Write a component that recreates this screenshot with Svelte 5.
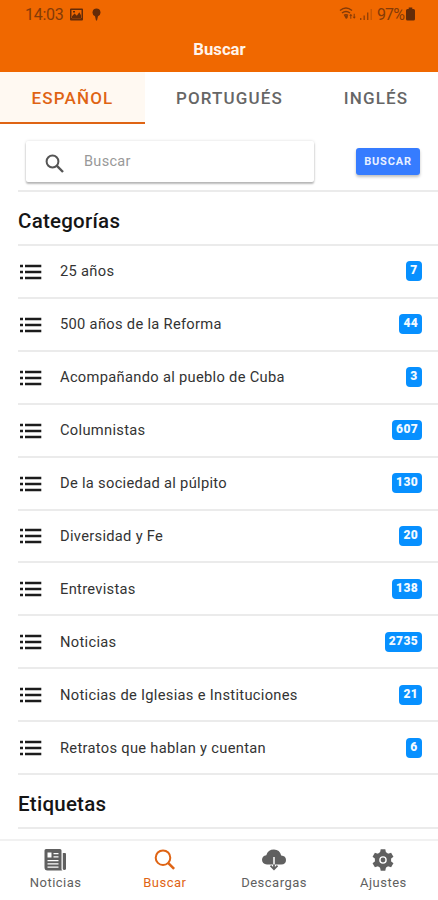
<script>
  const languages = ['ESPAÑOL', 'PORTUGUÉS', 'INGLÉS'];
  const categories = [
    ['25 años', 7],
    ['500 años de la Reforma', 44],
    ['Acompañando al pueblo de Cuba', 3],
    ['Columnistas', 607],
    ['De la sociedad al púlpito', 130],
    ['Diversidad y Fe', 20],
    ['Entrevistas', 138],
    ['Noticias', 2735],
    ['Noticias de Iglesias e Instituciones', 21],
    ['Retratos que hablan y cuentan', 6]
  ];
  let language = $state('ESPAÑOL');
  let query = $state('');
</script>

<div class="app">
  <header>
    <div class="status">
      <span class="time">14:03</span>
      <svg class="photo" width="13" height="13" viewBox="0 0 13 13">
        <path fill="currentColor" fill-rule="evenodd" d="M1 0.5h11a1 1 0 0 1 1 1v10a1 1 0 0 1-1 1H1a1 1 0 0 1-1-1v-10a1 1 0 0 1 1-1zM1.5 2v8h10V2zM2 10.3V8.2l2.5-2.7 2.3 2.3 2.5-3.5L11 7.3v3zM3 3h2v1.6H3z" />
      </svg>
      <svg class="pin" width="9" height="13" viewBox="0 0 9 13">
        <path fill="currentColor" d="M4.5 0.5a4 4 0 0 1 1.5 7.7L5 12.5H4L3 8.2A4 4 0 0 1 4.5.5z" />
      </svg>
      <span class="grow"></span>
      <svg class="wifi" width="18" height="14" viewBox="0 0 18 14" fill="none" stroke="currentColor">
        <path stroke-width="1.5" d="M1 3.5Q7 -1.3 13 3.5M3 6q4-3.1 8 0M5 8.4q2-1.5 4 0" />
        <path fill="currentColor" stroke="none" d="M5 8.500h4L8.500 11 7 12zM11.8 6.800l1.6 2h-1.1v3h-1v-3h-1.1zM15.2 11.800l-1.6-2h1.1v-3h1v3h1.1z" />
      </svg>
      <svg class="signal" width="13" height="13" viewBox="0 0 13 13">
        <path fill="currentColor" opacity=".85" d="M0 10h1.4v2H0zM3.5 7.5h1.4V12H3.5zM7 4.5h1.4V12H7z" />
        <path fill="currentColor" opacity=".35" d="M10.5 1H12v11h-1.5z" />
      </svg>
      <span class="percent">97%</span>
      <svg class="battery" width="9" height="14" viewBox="0 0 9 14">
        <path fill="currentColor" d="M2.7.5h3.6V2h1.2Q9 2 9 3.5v8.5q0 1.5-1.5 1.5h-6Q0 13.5 0 12V3.5Q0 2 1.5 2h1.2z" />
      </svg>
    </div>
    <h1>Buscar</h1>
  </header>

  <div class="languages">
    {#each languages as name}
      <button class:active={language === name} onclick={() => (language = name)}><span>{name}</span></button>
    {/each}
  </div>

  <main>
    <div class="search">
      <label>
        <svg width="20" height="20" viewBox="0 0 20 20" fill="none" stroke="#555" stroke-width="2">
          <circle cx="7.5" cy="7.5" r="5.9" />
          <path stroke-width="2.4" d="M11.7 11.7L18 18" />
        </svg>
        <input placeholder="Buscar" bind:value={query} />
      </label>
      <button>BUSCAR</button>
    </div>
    <h2 class="first">Categorías</h2>
    {#each categories as [name, count]}
      <div class="row">
        <svg width="22" height="16" viewBox="0 0 22 16" fill="#1c1c1c">
          <path d="M0 .8h3v2.4H0zM5 .8h16.3v2.4H5zM0 6.8h3v2.4H0zM5 6.8h16.3v2.4H5zM0 12.8h3v2.4H0zM5 12.8h16.3v2.4H5z" />
        </svg>
        <span class="name">{name}</span>
        <span class="badge">{count}</span>
      </div>
    {/each}
    <h2>Etiquetas</h2>
  </main>

  <nav>
    <a href="#noticias">
      <svg width="23" height="22" viewBox="0 0 23 22">
        <path fill="currentColor" fill-rule="evenodd" d="M2 0h14q1.5 0 1.5 1.5V20q0 1.5 1.5 1.5H3.5Q.5 21.5.5 18.5v-17Q.5 0 2 0zM3.5 3.5v5h4v-5zM9.500 4v1.300h5V4zM9.500 7.200v1.300h5V7.200zM3.500 11v1.300h11V11zM3.500 14.200v1.300h11v-1.300zM3.500 17.400v1.300h11v-1.300z" />
        <path fill="currentColor" d="M18.8 4H21q1 0 1 1v14.5q0 1.5-1.6 1.5t-1.6-1.5z" />
      </svg>
      <span>Noticias</span>
    </a>
    <a href="#buscar" class="active">
      <svg width="22" height="22" viewBox="0 0 22 22" fill="none" stroke="currentColor">
        <circle cx="9" cy="8.7" r="7.3" stroke-width="2" />
        <path stroke-width="2.5" d="M14.1 13.9l6 6" />
      </svg>
      <span>Buscar</span>
    </a>
    <a href="#descargas">
      <svg width="24" height="22" viewBox="0 0 24 22">
        <path fill="currentColor" d="M5 15.5Q0 15 0 10.8 0 7 4.3 6.2 5.8.5 12 .5q5.8 0 7.2 6Q24 6.8 24 11q0 4.3-4.8 4.5z" />
        <path fill="none" stroke="#fff" stroke-width="1.5" d="M12 8v7.5" />
        <path fill="none" stroke="currentColor" stroke-width="1.8" d="M12 15.5v4M8.5 16.7l3.5 3.5 3.5-3.5" />
      </svg>
      <span>Descargas</span>
    </a>
    <a href="#ajustes">
      <svg width="22" height="22" viewBox="0 0 22 22">
        <g fill="currentColor">
          <circle cx="11" cy="11" r="8.2" />
          {#each [0, 60, 120, 180, 240, 300] as angle}
            <path transform="rotate({angle} 11 11)" d="M8.7.3h4.6l.8 4H7.900z" />
          {/each}
        </g>
        <circle cx="11" cy="11" r="3.1" fill="none" stroke="#fff" stroke-width="1.4" />
      </svg>
      <span>Ajustes</span>
    </a>
  </nav>
</div>

<style>
  :global(body) { background: #fff; }
  .app {
    width: 438px;
    height: 900px;
    display: flex;
    flex-direction: column;
    overflow: hidden;
    background: #fff;
    color: #222;
    font-family: Roboto, sans-serif;
  }
  .app * { box-sizing: border-box; }
  svg { display: block; flex: none; }
  button { border: 0; padding: 0; background: none; font-family: inherit; }
  header { height: 72px; flex: none; background: #f06800; }
  .status {
    height: 28px;
    padding: 0 23px 0 25px;
    display: flex;
    align-items: center;
    color: #843b08;
    font-size: 16px;
  }
  .time { letter-spacing: -0.3px; width: 45px; }
  .photo, .pin { color: #632b08; }
  .pin { margin-left: 9px; }
  .grow { flex: 1; }
  .wifi { margin-right: 1px; }
  .signal { margin-left: 2px; }
  .percent { margin-left: 4px; letter-spacing: -0.9px; }
  .battery { margin-left: 2px; color: #632b08; }
  h1 {
    margin: 0;
    height: 43px;
    line-height: 43px;
    padding-left: 1px;
    text-align: center;
    color: #fff4eb;
    font-size: 16.7px;
    font-weight: 700;
  }
  .languages { height: 52px; flex: none; display: flex; }
  .languages button {
    flex: 0 0 145px;
    padding-top: 2px;
    color: #666;
    font-size: 17px;
    font-weight: 500;
    letter-spacing: 1.15px;
    border-bottom: 2px solid transparent;
  }
  .languages button:nth-child(2) { flex-basis: 169px; }
  .languages button:nth-child(3) { flex-basis: 124px; }
  .languages button.active { color: #df6414; background: #fff9f2; border-color: #df6414; }
  main { flex: 1; min-height: 0; }
  .search {
    height: 66px;
    margin-left: 18px;
    padding: 17px 18px 0 8px;
    display: flex;
    justify-content: space-between;
    align-items: flex-start;
  }
  label {
    width: 288px;
    height: 41px;
    display: flex;
    align-items: center;
    padding: 4px 0 0 19px;
    border-radius: 2px;
    box-shadow: 0 2px 2px rgba(0, 0, 0, .25), 0 0 3px rgba(0, 0, 0, .15);
  }
  input {
    border: 0;
    outline: 0;
    background: none;
    width: 200px;
    margin: -4px 0 0 17px;
    font: 14.5px Roboto, sans-serif;
    letter-spacing: .3px;
  }
  input::placeholder { color: #999; opacity: 1; }
  .search button {
    width: 64px;
    height: 27px;
    margin-top: 7px;
    border-radius: 3px;
    background: #367cff;
    color: #e8f0ff;
    font-size: 11px;
    font-weight: 700;
    letter-spacing: .8px;
    box-shadow: 0 2px 3px rgba(0, 0, 0, .25);
  }
  h2 {
    margin: 0 0 0 18px;
    height: 54px;
    line-height: 59px;
    border-bottom: 2px solid #ebebeb;
    color: #151515;
    font-size: 20.5px;
    font-weight: 500;
    letter-spacing: .25px;
  }
  h2.first { height: 56px; border-top: 2px solid #ebebeb; }
  .row {
    height: 52.92px;
    margin-left: 18px;
    padding: 0 16px 0 2px;
    display: flex;
    align-items: center;
    border-bottom: 2px solid #ebebeb;
  }
  .name { flex: 1; margin-left: 18px; font-size: 14.7px; letter-spacing: .3px; color: #333; }
  .row svg { margin-top: 1px; }
  .badge {
    height: 20px;
    line-height: 18.5px;
    min-width: 16px;
    padding: 0 4px;
    text-align: center;
    border-radius: 4px;
    background: #0790ff;
    color: #f4faff;
    font-size: 12px;
    font-weight: 900;
    letter-spacing: .35px;
  }
  nav { height: 61px; flex: none; display: flex; padding-left: 1px; border-top: 2px solid #f1f1f1; background: #fff; }
  nav a {
    flex: 1;
    padding-top: 8px;
    display: flex;
    flex-direction: column;
    align-items: center;
    color: #606060;
    text-decoration: none;
    font-size: 13px;
    letter-spacing: .5px;
  }
  nav a span { margin-top: 4px; line-height: 16px; }
  nav a.active { color: #df6414; }
</style>
